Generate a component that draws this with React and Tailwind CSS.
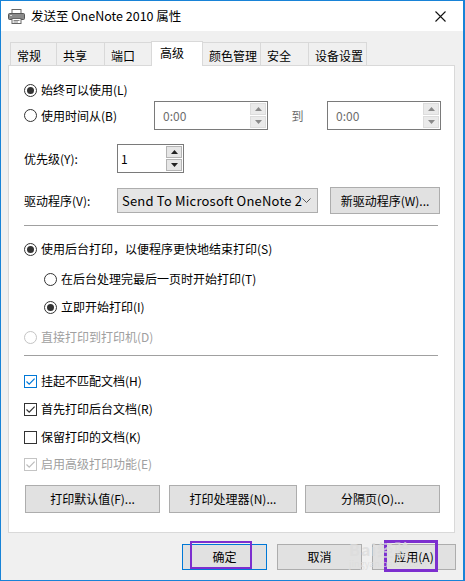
const FONT = { fontFamily: '"Noto Sans CJK SC", "Microsoft YaHei", "Liberation Sans", sans-serif' };

function Radio({ checked, disabled, label, indent }) {
  return (
    <div className={`flex h-[20px] items-center gap-[4px] ${indent ? 'pl-[35px]' : 'pl-[15px]'}`}>
      <span
        className={`flex h-[13px] w-[13px] items-center justify-center rounded-full border bg-white ${
          disabled ? 'border-[#c4c4c4]' : 'border-[#333333]'
        }`}
      >
        {checked && <span className="h-[7px] w-[7px] rounded-full bg-[#333333]" />}
      </span>
      <span className={disabled ? 'text-[#a0a0a0]' : 'text-black'}>{label}</span>
    </div>
  );
}

function Check({ checked, variant, label }) {
  // variant: focus (blue), normal, disabled
  const border =
    variant === 'focus' ? 'border-[#0078d7]' : variant === 'disabled' ? 'border-[#c4c4c4]' : 'border-[#333333]';
  const stroke = variant === 'focus' ? '#0078d7' : variant === 'disabled' ? '#bcbcbc' : '#333333';
  return (
    <div className="flex h-[20px] items-center gap-[4px] pl-[15px]">
      <span className={`flex h-[13px] w-[13px] items-center justify-center border bg-white ${border}`}>
        {checked && (
          <svg width="11" height="11" viewBox="0 0 11 11">
            <path d="M1.5 5.5 L4.2 8.2 L9.6 2.6" fill="none" stroke={stroke} strokeWidth="1.2" />
          </svg>
        )}
      </span>
      <span className={variant === 'disabled' ? 'text-[#a0a0a0]' : 'text-black'}>{label}</span>
    </div>
  );
}

function SpinArrows({ disabled }) {
  const b = disabled ? 'border-[#dcdcdc] bg-[#eaeaea]' : 'border-[#b4b4b4] bg-[#e6e6e6]';
  const fill = disabled ? '#8a8a8a' : '#222222';
  return (
    <div className="flex flex-col gap-[1px] pr-[1px]">
      <span className={`flex h-[12px] w-[16px] items-center justify-center border ${b}`}>
        <svg width="7" height="4" viewBox="0 0 7 4"><path d="M0 4 L3.5 0 L7 4 Z" fill={fill} /></svg>
      </span>
      <span className={`flex h-[12px] w-[16px] items-center justify-center border ${b}`}>
        <svg width="7" height="4" viewBox="0 0 7 4"><path d="M0 0 L7 0 L3.5 4 Z" fill={fill} /></svg>
      </span>
    </div>
  );
}

function TimeBox() {
  return (
    <div className="flex h-[29px] w-[114px] items-center justify-between border border-[#7a7a7a] bg-white pl-[8px]">
      <span className="text-[#6d6d6d]">0:00</span>
      <SpinArrows disabled />
    </div>
  );
}

function Btn({ children, className }) {
  return (
    <div
      className={`flex items-center justify-center border border-[#adadad] bg-[#e1e1e1] text-black ${className}`}
    >
      {children}
    </div>
  );
}

function PrinterIcon() {
  return (
    <svg width="17" height="15" viewBox="0 0 17 15">
      <rect x="4" y="0.5" width="9" height="4" fill="#fff" stroke="#666" />
      <rect x="0.5" y="4.5" width="16" height="6" rx="1" fill="#8a8a8a" stroke="#555" />
      <rect x="2" y="6" width="2" height="1" fill="#ddd" />
      <rect x="4" y="9.5" width="9" height="5" fill="#fff" stroke="#666" />
      <line x1="5.5" y1="11.5" x2="11.5" y2="11.5" stroke="#888" />
      <line x1="5.5" y1="13" x2="10" y2="13" stroke="#888" />
    </svg>
  );
}

const TABS = [
  { label: '常规', w: 47 },
  { label: '共享', w: 48 },
  { label: '端口', w: 47 },
  { label: '高级', w: 51, active: true },
  { label: '颜色管理', w: 58 },
  { label: '安全', w: 48 },
  { label: '设备设置', w: 58 },
];

export default function App() {
  return (
    <div
      className="relative flex h-[581px] w-[465px] flex-col overflow-hidden border-y border-l border-r-2 border-[#1883d7] bg-[#f0f0f0] text-[12px] leading-none"
      style={FONT}
    >
      {/* title bar */}
      <div className="flex h-[30px] items-center bg-white pl-[7px] pr-[8px]">
        <PrinterIcon />
        <span className="ml-[6px] text-[12.5px] text-black">发送至 OneNote 2010 属性</span>
        <div className="ml-auto flex h-[30px] w-[30px] items-center justify-center">
          <svg width="11" height="11" viewBox="0 0 11 11">
            <path d="M0.5 0.5 L10.5 10.5 M10.5 0.5 L0.5 10.5" stroke="#111" strokeWidth="1.1" />
          </svg>
        </div>
      </div>

      {/* tabs */}
      <div className="flex h-[34px] items-end pl-[9px] pt-[9px]">
        {TABS.map((t, i) =>
          t.active ? (
            <div
              key={t.label}
              className="relative z-10 -mb-px -ml-px flex h-[25px] items-start border border-b-0 border-[#d9d9d9] bg-white pl-[8px] pt-[5px]"
              style={{ width: t.w + 1 }}
            >
              {t.label}
            </div>
          ) : (
            <div
              key={t.label}
              className={`flex h-[23px] items-center border border-b-0 border-[#d9d9d9] bg-[#f0f0f0] pl-[6px] pt-[3px] ${
                i > 0 ? '-ml-px' : ''
              }`}
              style={{ width: t.w + (i > 0 ? 1 : 0) }}
            >
              {t.label}
            </div>
          )
        )}
      </div>

      {/* panel */}
      <div className="mx-[7px] flex h-[468px] w-[447px] flex-col border border-[#d9d9d9] bg-white">
        <div className="mt-[14px]">
          <Radio checked label="始终可以使用(L)" />
        </div>
        <div className="mt-[1px] flex h-[29px] items-center">
          <div className="w-[145px]">
            <Radio label="使用时间从(B)" />
          </div>
          <TimeBox />
          <span className="w-[59px] text-center text-[#6d6d6d]">到</span>
          <TimeBox />
        </div>
        <div className="mt-[14px] flex h-[29px] items-center pl-[15px]">
          <span className="w-[93px]">优先级(Y):</span>
          <div className="flex h-[29px] w-[67px] items-center justify-between border border-[#7a7a7a] bg-white pl-[3px]">
            <span>1</span>
            <SpinArrows />
          </div>
        </div>
        <div className="mt-[14px] flex h-[27px] items-center pl-[15px]">
          <span className="w-[93px]">驱动程序(V):</span>
          <div className="flex h-[25px] w-[201px] items-center border border-[#adadad] bg-[#e5e5e5] pl-[4px] pr-[6px]">
            <span className="w-[180px] overflow-hidden whitespace-nowrap text-[13px] tracking-[0.2px]">
              Send To Microsoft OneNote 2
            </span>
            <svg className="ml-auto shrink-0" width="9" height="5" viewBox="0 0 9 5">
              <path d="M0.5 0.5 L4.5 4.5 L8.5 0.5" fill="none" stroke="#555" />
            </svg>
          </div>
          <Btn className="ml-[12px] h-[27px] w-[110px]">新驱动程序(W)...</Btn>
        </div>
        <div className="ml-[15px] mt-[11px] h-px w-[414px] bg-[#a0a0a0]" />
        <div className="mt-[13px]">
          <Radio checked label="使用后台打印，以便程序更快地结束打印(S)" />
        </div>
        <div className="mt-[10px]">
          <Radio indent label="在后台处理完最后一页时开始打印(T)" />
        </div>
        <div className="mt-[8px]">
          <Radio indent checked label="立即开始打印(I)" />
        </div>
        <div className="mt-[10px]">
          <Radio disabled label="直接打印到打印机(D)" />
        </div>
        <div className="ml-[15px] mt-[8px] h-px w-[414px] bg-[#a0a0a0]" />
        <div className="mt-[15px]">
          <Check checked variant="focus" label="挂起不匹配文档(H)" />
        </div>
        <div className="mt-[8px]">
          <Check checked label="首先打印后台文档(R)" />
        </div>
        <div className="mt-[8px]">
          <Check label="保留打印的文档(K)" />
        </div>
        <div className="mt-[7px]">
          <Check checked variant="disabled" label="启用高级打印功能(E)" />
        </div>
        <div className="mt-[11px] flex h-[28px] pl-[16px]">
          <Btn className="h-[28px] w-[135px]">打印默认值(F)...</Btn>
          <Btn className="ml-[9px] h-[28px] w-[128px]">打印处理器(N)...</Btn>
          <Btn className="ml-[8px] h-[28px] w-[135px]">分隔页(O)...</Btn>
        </div>
      </div>

      {/* bottom buttons */}
      <div className="mt-[11px] flex h-[26px] pl-[181px]">
        <div className="flex h-[26px] w-[85px] items-center justify-center border border-[#0078d7] bg-[#e1e1e1]">
          确定
        </div>
        <Btn className="ml-[10px] h-[26px] w-[85px]">取消</Btn>
        <Btn className="ml-[10px] h-[26px] w-[84px]">应用(A)</Btn>
      </div>

      {/* annotation boxes */}
      <div className="pointer-events-none absolute left-[189px] top-[540px] h-[28px] w-[62px] border-2 border-[#7d2fcf]" />
      <div className="pointer-events-none absolute left-[383px] top-[539px] h-[32px] w-[54px] border-[3px] border-[#7d2fcf]" />

      {/* watermark */}
      <div className="pointer-events-none absolute left-[348px] top-[540px] flex flex-col items-start">
        <span className="text-[16px] font-bold tracking-[1px] text-[#dcdcdc]/80">Bai经验</span>
        <span className="mt-[2px] text-[9px] text-[#dcdcdc]/80">jingyan.baidu.com</span>
      </div>
    </div>
  );
}
